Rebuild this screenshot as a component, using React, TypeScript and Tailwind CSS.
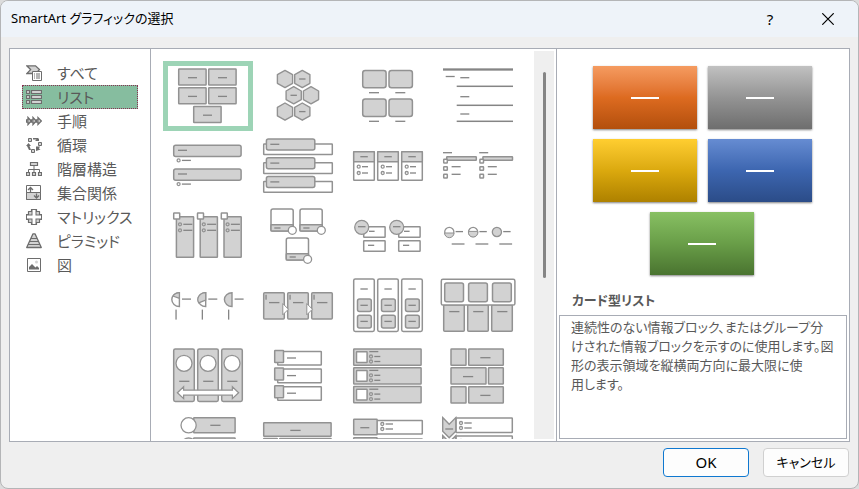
import { useState } from 'react';
import type { ReactNode } from 'react';

const GRAY = '#d2d2d2';
const EDGE = '#929292';

interface BoxProps {
    x: number;
    y: number;
    w: number;
    h: number;
    r?: number;
    fill?: string;
}

function Box({ x, y, w, h, r = 0.5, fill = GRAY }: BoxProps) {
    return <rect x={x + 0.7} y={y + 0.7} width={w - 1.4} height={h - 1.4} rx={r} fill={fill} stroke={EDGE} strokeWidth={1.5} />;
}

function Dash({ x, y, w = 9, h = 1.3 }: { x: number; y: number; w?: number; h?: number }) {
    return <rect x={x} y={y - h / 2} width={w} height={h} fill="#858585" />;
}

function Dot({ x, y, r = 1.5, fill = 'none' }: { x: number; y: number; r?: number; fill?: string }) {
    return <circle cx={x} cy={y} r={r} fill={fill} stroke={EDGE} strokeWidth={1.3} />;
}

function Bullet({ x, y, w = 6 }: { x: number; y: number; w?: number }) {
    return (
        <>
            <Dot x={x} y={y} />
            <Dash x={x + 3.3} y={y} w={w} />
        </>
    );
}

function Shift({ x = 0, y = 0, children }: { x?: number; y?: number; children: ReactNode }) {
    return <g transform={`translate(${x} ${y})`}>{children}</g>;
}

function Hex({ x, y, dash }: { x: number; y: number; dash?: boolean }) {
    return (
        <Shift x={x} y={y}>
            <path d="M0-8.6 7.6-4.3V4.3L0 8.6-7.6 4.3V-4.3Z" fill={GRAY} stroke={EDGE} strokeWidth={1.4} strokeLinejoin="round" />
            {dash && <Dash x={-3.2} y={0} w={6.4} />}
        </Shift>
    );
}

// One drawing for each layout, on a 90x70 canvas
const layouts: { name: string; art: ReactNode }[] = [
    {
        name: 'カード型リスト',
        art: (
            <>
                {[[15, 7.3], [45, 7.3], [15, 26], [45, 26], [30, 44.8]].map(([x, y]) => (
                    <Shift key={`${x}-${y}`} x={x} y={y}>
                        <Box x={0} y={0} w={28.8} h={17.4} />
                        <Dash x={10} y={9.4} />
                    </Shift>
                ))}
            </>
        ),
    },
    {
        name: '六角形',
        art: (
            <>
                <Hex x={32} y={18} />
                <Hex x={49.3} y={18} dash />
                <Hex x={40.7} y={34.3} dash />
                <Hex x={58} y={34.3} />
                <Hex x={32} y={50.6} />
                <Hex x={49.3} y={50.6} dash />
            </>
        ),
    },
    {
        name: '図表題リスト',
        art: (
            <>
                {[[19, 8.7], [45.3, 8.7], [19, 37.3], [45.3, 37.3]].map(([x, y]) => (
                    <Shift key={`${x}-${y}`} x={x} y={y}>
                        <Box x={0} y={0} w={24.8} h={18.8} r={2.5} />
                        <Dash x={7} y={23} w={10} />
                    </Shift>
                ))}
            </>
        ),
    },
    {
        name: '線区切りリスト',
        art: (
            <>
                <Dash x={10} y={8.5} w={70} h={2.3} />
                <Dash x={12.7} y={15.5} />
                {[[16.7, 25.3], [35.7, 44.3], [53, 60.3]].map(([a, b]) => (
                    <g key={a}>
                        <Dash x={27.3} y={a} />
                        <Dash x={23.7} y={b} w={56.3} h={1.5} />
                    </g>
                ))}
            </>
        ),
    },
    {
        name: '縦方向箇条書きリスト',
        art: (
            <>
                {[0, 23.7].map((y) => (
                    <Shift key={y} y={y}>
                        <Box x={10} y={13.6} w={68.8} h={12.6} r={2} />
                        <Dash x={15} y={19.3} />
                        <Bullet x={15.6} y={29.4} w={9} />
                    </Shift>
                ))}
            </>
        ),
    },
    {
        name: '縦方向ボックスリスト',
        art: (
            <>
                {[0, 18.8, 37.6].map((y) => (
                    <Shift key={y} y={y}>
                        <Box x={10} y={12.3} w={70} h={12} fill="#fff" />
                        <Box x={12.7} y={7.3} w={49.8} h={12.4} r={2} />
                        <Dash x={17.3} y={13.3} />
                    </Shift>
                ))}
            </>
        ),
    },
    {
        name: '横方向箇条書きリスト',
        art: (
            <>
                {[0, 24, 48].map((x) => (
                    <Shift key={x} x={x}>
                        <Box x={10} y={20} w={22} h={30} fill="#fff" />
                        <Box x={10} y={20} w={22} h={11.5} />
                        <Dash x={17.3} y={25.7} w={7.5} />
                        <Bullet x={15.7} y={35.7} />
                        <Bullet x={15.7} y={42} />
                    </Shift>
                ))}
            </>
        ),
    },
    {
        name: '正方形強調リスト',
        art: (
            <>
                {[0, 36.2].map((x) => (
                    <Shift key={x} x={x}>
                        <Dash x={10} y={21.7} />
                        <Box x={13} y={25} w={31} h={5} />
                        <Box x={10} y={27.6} w={5} h={5} fill="#fff" />
                        <Box x={10} y={35} w={5} h={5} fill="#fff" />
                        <Box x={10} y={42.6} w={5} h={5} fill="#fff" />
                        <Dash x={18.6} y={35.7} />
                        <Dash x={18.6} y={43.3} />
                    </Shift>
                ))}
            </>
        ),
    },
    {
        name: '図強調リスト',
        art: (
            <>
                {[0, 23.8, 47.6].map((x) => (
                    <Shift key={x} x={x}>
                        <Box x={12.7} y={15} w={18.6} h={42} />
                        <Box x={10} y={11.3} w={7.4} h={7.4} fill="#fff" />
                        <Bullet x={17} y={23.3} w={9} />
                        <Bullet x={17} y={29.3} w={9} />
                    </Shift>
                ))}
            </>
        ),
    },
    {
        name: '曲線図リスト',
        art: (
            <>
                {[[0, 0], [29, 0], [15.3, 29]].map(([x, y]) => (
                    <Shift key={x} x={x} y={y}>
                        <Box x={17.3} y={7.3} w={23.6} h={23.4} r={2} fill="#fff" />
                        <Box x={17.3} y={23} w={23.6} h={7.8} />
                        <Dash x={21.3} y={27} w={6.2} />
                        <Dot x={39.3} y={29.3} r={4} fill="#fff" />
                    </Shift>
                ))}
            </>
        ),
    },
    {
        name: '積み上げリスト',
        art: (
            <>
                {[0, 35].map((x) => (
                    <Shift key={x} x={x}>
                        <Box x={20} y={25} w={22.8} h={12} fill="#fff" />
                        <Box x={20} y={39} w={22.8} h={12} fill="#fff" />
                        <Dash x={26} y={30.3} w={5.6} />
                        <Dash x={25} y={44.3} w={6.2} />
                        <Dot x={18.7} y={26.3} r={7} fill={GRAY} />
                        <Dash x={15} y={25.7} w={7.5} />
                    </Shift>
                ))}
            </>
        ),
    },
    {
        name: '増加円プロセス',
        art: (
            <>
                {['M-4.7 1A4.7 4.7 0 0 0 4.7 1Z', 'M-4.6-.6A4.7 4.7 0 1 0 4.6-.6Z', ''].map((d, i) => (
                    <Shift key={i} x={16.3 + i * 23.8} y={31}>
                        <circle r={4.6} fill={d ? '#fff' : GRAY} stroke={EDGE} strokeWidth={1.3} />
                        {d && <path d={d} fill={GRAY} stroke={EDGE} />}
                        <Dash x={6.3} y={-0.4} w={7.4} />
                        <Dash x={2.4} y={12} w={12.8} />
                    </Shift>
                ))}
            </>
        ),
    },
    {
        name: '円グラフ型プロセス',
        art: (
            <>
                {['M0-6.9Q-4-6.800-6.500-3.600L0-1.200Z', 'M0-6.9A7.6 7 0 0 0-7 3.300L0 .5Z', ''].map((d, i) => (
                    <Shift key={i} x={16.4 + i * 26.3} y={28.6}>
                        <path d="M0-6.9A7.6 6.900 0 0 0 0 6.900Z" fill={d ? '#fff' : GRAY} stroke={EDGE} strokeWidth={1.4} />
                        {d && <path d={d} fill={GRAY} stroke={EDGE} strokeWidth={1.2} />}
                        <Dash x={2.6} y={-0.5} />
                        <rect x={-4} y={10} width={1.3} height={10} fill="#858585" />
                    </Shift>
                ))}
            </>
        ),
    },
    {
        name: '詳細プロセス',
        art: (
            <>
                {[0, 24, 48].map((x) => (
                    <Shift key={x} x={x}>
                        <Box x={10} y={21} w={22} h={27.8} r={1} />
                        <rect x={12.4} y={23.7} width={1.3} height={5} fill="#858585" />
                        <Dash x={16} y={31.6} w={10.4} />
                    </Shift>
                ))}
                <path d="M29.8 32.6 35.4 38.2 29.8 43.8ZM53.8 32.6 59.4 38.2 53.8 43.8Z" fill="#fff" stroke={EDGE} />
            </>
        ),
    },
    {
        name: 'グループリスト',
        art: (
            <>
                {[0, 24, 48].map((x) => (
                    <Shift key={x} x={x}>
                        <Box x={10} y={7.3} w={22} h={53.8} r={1.6} fill="#fff" />
                        <Dash x={17.4} y={18} w={7.4} />
                        <Box x={13.8} y={27.3} w={15.2} h={14} r={2} />
                        <Box x={13.8} y={43.6} w={15.2} h={14} r={2} />
                        <Dash x={17.4} y={34.3} w={7.4} />
                        <Dash x={17.4} y={50.4} w={7.4} />
                    </Shift>
                ))}
            </>
        ),
    },
    {
        name: '横方向図リスト',
        art: (
            <>
                {[0, 24, 48].map((x) => (
                    <Shift key={x} x={x}>
                        <Box x={10} y={33} w={22} h={28} r={1} />
                        <Dash x={16.2} y={40.6} w={10.2} />
                    </Shift>
                ))}
                <Box x={7.6} y={7.6} w={75} h={27.2} r={1.6} fill="#fff" />
                {[11, 34.9, 58.8].map((x) => (
                    <Box key={x} x={x} y={11.3} w={20.2} h={20.2} r={2} />
                ))}
            </>
        ),
    },
    {
        name: '連続性強調リスト',
        art: (
            <>
                {[0, 24, 48].map((x) => (
                    <Shift key={x} x={x}>
                        <Box x={10} y={7.3} w={22} h={53.8} r={1.6} />
                        <Dot x={21} y={22.3} r={8} fill="#fff" />
                        <Dash x={16.2} y={40.3} w={10.2} />
                    </Shift>
                ))}
                <path d="M14.4 51.7 20.6 45.8V49.2H69.4V45.8L75.6 51.7 69.4 57.6V54.2H20.6V57.6Z" fill="#fff" stroke={EDGE} strokeWidth={1.3} />
            </>
        ),
    },
    {
        name: '縦方向図リスト',
        art: (
            <>
                {[0, 17.6, 35.2].map((y) => (
                    <Shift key={y} y={y}>
                        <Box x={24} y={9.8} w={45} h={15} fill="#fff" />
                        <Box x={21} y={8.8} w={10.2} h={13.4} />
                        <Dash x={34} y={17} />
                    </Shift>
                ))}
            </>
        ),
    },
    {
        name: '縦方向図強調リスト',
        art: (
            <>
                {[0, 18.8, 37.6].map((y) => (
                    <Shift key={y} y={y}>
                        <Box x={10} y={7.3} w={68.8} h={17.6} />
                        <Box x={12.8} y={10} w={12} h={12.2} fill="#fff" />
                        <Dash x={26.3} y={10.6} />
                        <Bullet x={28} y={15.5} />
                        <Bullet x={28} y={20.5} />
                    </Shift>
                ))}
            </>
        ),
    },
    {
        name: '交互ブロック',
        art: (
            <>
                {[7.3, 45].map((y) => (
                    <Shift key={y} y={y}>
                        <Box x={17.3} y={0} w={16.4} h={17.6} />
                        <Box x={35} y={0} w={36} h={17.6} />
                        <Dash x={47.3} y={9.4} w={10.2} />
                    </Shift>
                ))}
                <Box x={17.3} y={26.1} w={36.4} h={17.6} />
                <Box x={54.8} y={26.1} w={16.2} h={17.6} />
                <Dash x={30} y={35.6} w={10.2} />
            </>
        ),
    },
    {
        name: '円形強調リスト',
        art: (
            <>
                <Box x={30} y={6} w={42.8} h={16.4} />
                <Dot x={25.6} y={14.3} r={7.6} fill="#fff" />
                <Dash x={47.3} y={14.3} w={10.2} />
                <Box x={30} y={26.2} w={42.8} h={16.4} />
                <Dot x={25.6} y={34.6} r={7.6} fill="#fff" />
            </>
        ),
    },
    {
        name: '表リスト',
        art: (
            <>
                <Box x={10} y={11} w={68.8} h={15} />
                <Dash x={37.3} y={19.4} w={10.3} />
                <Box x={10} y={26.8} w={15} h={20} />
                <Box x={26} y={26.8} w={52.8} h={20} />
            </>
        ),
    },
    {
        name: '縦方向ブロックリスト',
        art: (
            <>
                {[0, 18.4].map((y) => (
                    <Shift key={y} y={y}>
                        <Box x={33} y={8.8} w={47} h={15} fill="#fff" />
                        <Box x={10} y={7.6} w={24.8} h={16.8} />
                        <Dash x={17.3} y={16.7} />
                        <Bullet x={39.3} y={13} w={7.4} />
                        <Bullet x={39.3} y={18} w={7.4} />
                    </Shift>
                ))}
            </>
        ),
    },
    {
        name: '縦方向プロセス',
        art: (
            <>
                {[0, 18].map((y) => (
                    <Shift key={y} y={y}>
                        <Box x={22.3} y={6.3} w={57.7} h={16} fill="#fff" />
                        <path d="M9.7 6.6 16.2 13.2 22.8 6.6V20.2L16.2 26.8 9.7 20.2Z" fill={GRAY} stroke={EDGE} strokeWidth={1.4} />
                        <Dash x={12.3} y={18} w={7.8} />
                        <Bullet x={28} y={12} w={7.4} />
                        <Bullet x={28} y={17} w={7.4} />
                    </Shift>
                ))}
            </>
        ),
    },
];

const S = '#6d6d6d';

const categories: { label: string; icon: ReactNode }[] = [
    {
        label: 'すべて',
        icon: (
            <>
                <path d="M.8.8H9.500L13.500 4.500 10 8.500H.8L4.6 4.600Z" fill={GRAY} stroke={S} strokeWidth={1.3} />
                <path d="M6.5 6.5h9v9h-9Z" fill="#fff" stroke={S} />
                <path d="M8 9h1M8 11h1M8 13h1M10 9h4M10 11h4M10 13h4" stroke={S} />
            </>
        ),
    },
    {
        label: 'リスト',
        icon: (
            <path
                d="M.5 1.5h3v3h-3ZM5.5 1.5h10v3h-10ZM.5 6.5h3v3h-3ZM5.5 6.5h10v3h-10ZM.5 11.5h3v3h-3ZM5.5 11.5h10v3h-10Z"
                fill={GRAY}
                stroke={S}
                strokeWidth={1.2}
            />
        ),
    },
    {
        label: '手順',
        icon: (
            <path
                d="M.5 7H2V4.500L5.200 8 2 11.500V9H.5ZM5.500 7H7V4.500L10.200 8 7 11.500V9H5.500ZM10.500 7H12V4.500L15.400 8 12 11.500V9H10.500Z"
                fill={GRAY}
                stroke={S}
                strokeWidth={1.3}
            />
        ),
    },
    {
        label: '循環',
        icon: (
            <>
                <path d="M2.500 1.500h3v3h-3ZM12.500 5.500h3v3h-3ZM5.500 12.500h3v3h-3Z" fill={GRAY} stroke={S} />
                <path d="M7 1h5l1 1V4H9L10.500 2.500H7ZM0 9 2.500 6 5 9H3.500L5 13H3L1 9ZM10 9.500h4L13 11.500l1.500 1L10 14Z" fill={S} />
            </>
        ),
    },
    {
        label: '階層構造',
        icon: (
            <>
                <path d="M8 4.500v7M2.500 11.500v-3h11v3" fill="none" stroke={S} />
                <path d="M4.500 1.500h7v3h-7ZM.5 11.500h3v3h-3ZM6.500 11.500h3v3h-3ZM12.500 11.500h3v3h-3Z" fill={GRAY} stroke={S} strokeWidth={1.2} />
            </>
        ),
    },
    {
        label: '集合関係',
        icon: (
            <>
                <path d="M.5.5h14v14H.5Z" fill="#fff" stroke={S} />
                <path d="M.5 7.500h14v7H.5Z" fill={GRAY} stroke={S} />
                <path d="M4.500 7V2.500M2 5l2.500-2.500L7 5M10.500 8.500v4.500M8 10.500 10.500 13l2.500-2.500" fill="none" stroke={S} strokeWidth={1.3} />
            </>
        ),
    },
    {
        label: 'マトリックス',
        icon: (
            <>
                <path d="M5.500.5h5v2h3v3h2v5h-2v3h-3v2h-5v-2h-3v-3h-2v-5h2v-3h3Z" fill={GRAY} stroke={S} strokeWidth={1.2} strokeLinejoin="round" />
                <path d="M8 1v14M1 8h14" stroke={S} strokeWidth={5} />
                <path d="M8 1v14M1 8h14" stroke="#fff" strokeWidth={3} />
            </>
        ),
    },
    {
        label: 'ピラミッド',
        icon: (
            <>
                <path d="M7 .8h2L15.300 14.500H.7Z" fill={GRAY} stroke={S} strokeWidth={1.3} strokeLinejoin="round" />
                <path d="M5 5.500h6M3.500 8.500h9M2 11.500h12" stroke={S} />
            </>
        ),
    },
    {
        label: '図',
        icon: (
            <>
                <path d="M1.500 1.500h13v13h-13Z" fill="#fff" stroke={S} />
                <path d="M3 12.500V10l3-3 3.500 3.500L11 9l2 2v1.500Z" fill={S} />
                <circle cx={10.5} cy={5} r={1.5} fill={GRAY} />
            </>
        ),
    },
];

const cards = [
    'from-[#f59b60] via-[#dd6b20] to-[#b34f0c]',
    'from-[#c1c1c1] via-[#949494] to-[#6e6e6e]',
    'from-[#ffce30] via-[#dba90e] to-[#ae8100]',
    'from-[#668cd2] via-[#3d66b0] to-[#2b4c88]',
    'from-[#88c063] via-[#699e48] to-[#4a7430]',
];

export default function App() {
    const [category, setCategory] = useState('リスト');
    const [layout, setLayout] = useState(0);

    return (
        <div className="h-screen bg-[#dcdcdc]">
            <div
                role="dialog"
                aria-labelledby="dialog-title"
                className="flex h-full flex-col overflow-hidden rounded-lg border border-[#b4b5b7] bg-[#efefef] font-['Noto_Sans','Noto_Sans_CJK_JP',sans-serif] text-[13px] text-[#595959] [font-feature-settings:'palt']"
            >
                {/* Title bar */}
                <header className="flex h-9 shrink-0 items-center bg-[#eef3f9] pl-[10px] text-black">
                    <h1 id="dialog-title" className="flex-1">SmartArt グラフィックの選択</h1>
                    <button type="button" aria-label="ヘルプ" className="h-full w-14 text-[15px]">?</button>
                    <button type="button" aria-label="閉じる" className="flex h-full w-[60px] items-center justify-center">
                        <svg width="12" height="12" viewBox="0 0 12 12" stroke="currentColor" strokeWidth="1.2">
                            <path d="M.3.3 11.700 11.700M11.700.3.3 11.700" />
                        </svg>
                    </button>
                </header>

                <main className="mx-2 mt-[11px] flex min-h-0 flex-1 border border-[#a8acb5] bg-white">
                    {/* Categories */}
                    <nav className="w-[141px] shrink-0 border-r border-[#a8acb5] px-3 pt-3">
                        {categories.map((c) => (
                            <button
                                key={c.label}
                                type="button"
                                onClick={() => setCategory(c.label)}
                                className={`flex h-6 w-full items-center gap-[15px] border border-dotted pl-[3px] text-[15px] leading-none ${
                                    c.label === category ? 'border-[#8a2f52] bg-[#86bd9f]' : 'border-transparent'
                                }`}
                            >
                                <svg width="16" height="16" viewBox="0 0 16 16" fill="none" className="shrink-0">
                                    {c.icon}
                                </svg>
                                <span className="whitespace-nowrap">{c.label}</span>
                            </button>
                        ))}
                    </nav>

                    {/* Layout gallery */}
                    <div className="flex min-w-0 flex-1 py-[2px] pr-[2px]">
                        <div className="grid min-w-0 flex-1 auto-rows-[70px] grid-cols-[repeat(auto-fill,90px)] overflow-y-auto pl-3 pt-[10px] [scrollbar-width:none]">
                            {layouts.map((l, i) => (
                                <button
                                    key={l.name}
                                    type="button"
                                    aria-label={l.name}
                                    onClick={() => setLayout(i)}
                                    className={i === layout ? 'shadow-[inset_0_0_0_5px_#9dd4b6]' : ''}
                                >
                                    <svg width="90" height="70" viewBox="0 0 90 70">{l.art}</svg>
                                </button>
                            ))}
                        </div>
                        <div className="flex w-5 justify-center bg-[#efefef] pt-[21px]">
                            <div className="h-[206px] w-[3px] rounded-full bg-[#858585]" />
                        </div>
                    </div>

                    {/* Preview */}
                    <section className="flex w-[293px] shrink-0 flex-col border-l border-[#a8acb5] px-[2px] pb-[2px] pt-[17px]">
                        <div className="flex flex-wrap justify-center gap-x-[11px] gap-y-[10px] pr-[2px]">
                            {cards.map((c) => (
                                <div
                                    key={c}
                                    className={`flex h-[63px] w-[104px] items-center justify-center bg-linear-to-b shadow-[0_1px_2px_rgba(0,0,0,0.5)] ${c}`}
                                >
                                    <div className="h-[2px] w-7 bg-white" />
                                </div>
                            ))}
                        </div>
                        <h2 className="mt-[15px] pl-[13px] font-bold leading-5">{layouts[layout].name}</h2>
                        <p className="mt-[5px] flex-1 border border-[#a8acb5] pl-[11px] pt-[2px] leading-[19px]">
                            連続性のない情報ブロック、またはグループ分
                            <br />
                            けされた情報ブロックを示すのに使用します。図
                            <br />
                            形の表示領域を縦横両方向に最大限に使
                            <br />
                            用します。
                        </p>
                    </section>
                </main>

                <footer className="flex shrink-0 justify-end gap-[14px] pb-[11px] pl-2 pr-[9px] pt-[6px] text-black">
                    <button type="button" className="h-[29px] w-[86px] rounded border border-[#0f78d0] bg-[#fdfdfd] text-[15px]">OK</button>
                    <button type="button" className="h-[29px] w-[86px] rounded border border-[#d0d0d0] bg-[#fdfdfd]">キャンセル</button>
                </footer>
            </div>
        </div>
    );
}
